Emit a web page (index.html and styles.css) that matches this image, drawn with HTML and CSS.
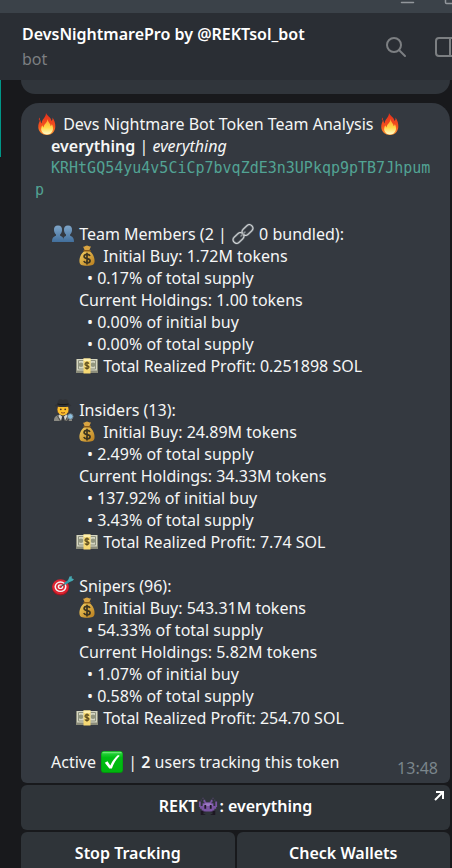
FILE: index.html
```html
<!DOCTYPE html>
<html lang="en">
<head>
    <meta charset="UTF-8">
    <meta name="viewport" content="width=device-width, initial-scale=1.0">
    <title>DevsNightmarePro by @REKTsol_bot</title>
    <link rel="stylesheet" href="styles.css">
</head>
<body>
    <!-- shared emoji drawings -->
    <svg class="sprite" aria-hidden="true">
        <defs>
            <linearGradient id="flame" x1="0" y1="0" x2="0" y2="1">
                <stop offset="0" stop-color="#e5301c"/>
                <stop offset="0.6" stop-color="#f4511e"/>
                <stop offset="1" stop-color="#ff9a2e"/>
            </linearGradient>
            <linearGradient id="flame-core" x1="0" y1="0" x2="0" y2="1">
                <stop offset="0" stop-color="#ff9d2b"/>
                <stop offset="0.55" stop-color="#ffd94a"/>
                <stop offset="1" stop-color="#fffbd0"/>
            </linearGradient>
            <linearGradient id="person" x1="0" y1="0" x2="0" y2="1">
                <stop offset="0" stop-color="#7fa6c9"/>
                <stop offset="1" stop-color="#426f9c"/>
            </linearGradient>
            <linearGradient id="gold" x1="0" y1="0" x2="1" y2="1">
                <stop offset="0" stop-color="#f3cf62"/>
                <stop offset="1" stop-color="#b87c1c"/>
            </linearGradient>
            <linearGradient id="green" x1="0" y1="0" x2="0" y2="1">
                <stop offset="0" stop-color="#35d849"/>
                <stop offset="0.3" stop-color="#00bd14"/>
                <stop offset="1" stop-color="#00b50e"/>
            </linearGradient>
        </defs>
        <symbol id="fire" viewBox="0 0 22 22">
            <path fill="url(#flame)" d="M10 0c1 3 5 4 5.500 8 1-1 1.200-2 1-3.500 2 3 3 6 2.800 9.500C19 19 15.500 22 11 22s-8.500-3-8.700-7.500C2.100 11.500 3 9 4.500 7c0 1.500.3 2.500 1.200 3.500C5.500 6 10 5 10 0z"/>
            <path fill="#c73a24" d="M3.500 4.500c.8 1.200.6 2.500-.2 3.500-.7-1.200-.6-2.400.2-3.500z"/>
            <path fill="url(#flame-core)" d="M11.500 6c.2 3 3 4.500 3.200 7.200.7-.6 1-1.200 1.100-2.200 1.300 2.500 1.700 5 .6 7.300-1 2-3 3.300-5.400 3.300s-4.500-1.300-5.400-3.300c-.8-2-.4-4.300.8-6 .2 1.200.6 1.700 1.300 2.200C7.600 11 11.500 10 11.500 6z"/>
        </symbol>
        <symbol id="people" viewBox="0 0 22 22">
            <g fill="url(#person)">
                <path d="M16 2.500c2.900 0 4.200 2 4 4.700-.1 1.900-.9 3.300-1.900 4.200v1.400c2 .8 3.900 1.500 3.900 6.200H11c0-4 1-5.200 3-6.200v-1.400c-1-.9-1.900-2.300-2-4.200-.2-2.700 1.100-4.700 4-4.700z"/>
                <path d="M6 2.500c2.900 0 4.200 2 4 4.700-.1 1.900-.9 3.300-1.900 4.200v1.400c2 .8 3.900 1.500 3.900 6.200H0c0-4.500 1.700-5.200 4-6.200v-1.400c-1-.9-1.900-2.300-2-4.200-.2-2.700 1.100-4.700 4-4.700z"/>
            </g>
        </symbol>
        <symbol id="chain" viewBox="0 0 22 22">
            <g fill="none" stroke="#5f666b" stroke-width="2.600">
                <rect x="9.500" y="3.500" width="12" height="7" rx="3.500" transform="rotate(-43 15.500 7)"/>
                <rect x="0.500" y="11.500" width="12" height="7" rx="3.500" transform="rotate(-43 6.500 15)"/>
            </g>
            <g fill="none" stroke="#d7dadc" stroke-width="1">
                <rect x="9.500" y="3.500" width="12" height="7" rx="3.500" transform="rotate(-43 15.500 7)"/>
                <rect x="0.500" y="11.500" width="12" height="7" rx="3.500" transform="rotate(-43 6.500 15)"/>
            </g>
            <path d="M9 13l4-4" stroke="#8c9296" stroke-width="1.500" stroke-linecap="round"/>
        </symbol>
        <symbol id="bag" viewBox="0 0 22 22">
            <path fill="#d9a441" d="M7 1.500c1.500.8 2.500-.9 4-.9s2 1.500 4 .7l-2 4.700H9z"/>
            <path fill="url(#gold)" d="M8.500 6h5c3.500 2.500 5.500 7 5 11-.3 3-2.300 3.700-7.500 3.700S3.800 20 3.500 17c-.5-4 1.500-8.500 5-11z"/>
            <path d="M8 5.700h6.200" stroke="#8a5a17" stroke-width="1.500" stroke-linecap="round"/>
            <path fill="none" stroke="#3c3420" stroke-width="1.700" d="M14 10.800c-.6-1.200-1.700-1.500-3-1.500-1.700 0-2.900.8-2.900 2.200 0 3 6 1.300 6 4.200 0 1.500-1.300 2.200-3 2.200-1.600 0-2.800-.6-3.300-1.900M11 7.700v11.800"/>
        </symbol>
        <symbol id="cash" viewBox="0 0 22 22">
            <path fill="#8b8c7a" d="M0 4h22v14H0z"/>
            <path fill="#d5d6c2" d="M1 4h20v11.500H1z"/>
            <path fill="none" stroke="#8f927f" d="M2.500 5.500h17v8.500h-17z"/>
            <circle cx="5" cy="9.800" r="2.300" fill="#92967f"/>
            <circle cx="17" cy="9.800" r="2.300" fill="#92967f"/>
            <path fill="#f5d873" d="M7.500 3.500h7v15h-7z"/>
            <path fill="#fff0ad" d="M7.500 3.500h7V6h-7z"/>
            <path fill="none" stroke="#5b4a1c" stroke-width="1.200" d="M13 8.700c-.5-.7-1.200-1-2-1-1.200 0-2 .6-2 1.500 0 2 4 1 4 2.900 0 1-.9 1.500-2 1.500-.9 0-1.700-.3-2.100-1.100M11 6.500v8.300"/>
        </symbol>
        <symbol id="spy" viewBox="0 0 22 22">
            <path fill="#5a4334" d="M5 7h12v7H5z"/>
            <ellipse cx="11" cy="10.500" rx="5.500" ry="6" fill="#fcbf2d"/>
            <path fill="#8b8b84" d="M2 22c0-4 1.500-5.500 6-6.500l3 3 3-3c4.500 1 6 2.500 6 6.500z"/>
            <path fill="#d6d6d0" d="M7.500 15.500l3.500 3 3.500-3 1 2.500-2.500 4h-4l-2.500-4z"/>
            <path fill="#33363a" d="M10 18h2l1 4H9z"/>
            <path d="M5.500 17l3 5M16 17l-2.500 5" stroke="#55554f" stroke-width="1.200"/>
            <path fill="#303236" d="M5.500 5C5.500 1.500 7 .3 8.500.3S10 1 11 1s1-.7 2.500-.7S16.500 1.500 16.500 5c1.500.4 2.700.8 2.700 1.500C19.200 7.500 15 8 11 8s-8.200-.5-8.200-1.500C2.800 5.800 4 5.400 5.500 5z"/>
            <path d="M5.500 5c3 .8 8 .8 11 0" fill="none" stroke="#17181a"/>
            <circle cx="8.800" cy="10.300" r="0.900" fill="#4a3426"/>
            <circle cx="13.200" cy="10.300" r="0.900" fill="#4a3426"/>
            <path d="M9 13.500c1.200.7 2.800.7 4 0" fill="none" stroke="#8c4d1d"/>
            <path d="M17 20l-1.500 2" stroke="#3a3c3e" stroke-width="1.500"/>
            <circle cx="18.300" cy="17.500" r="2.800" fill="#8dc0df" stroke="#69757d"/>
        </symbol>
        <symbol id="dart" viewBox="0 0 22 22">
            <ellipse cx="8.500" cy="12.700" rx="8.300" ry="7.800" fill="#9b1620"/>
            <ellipse cx="8.500" cy="11.700" rx="8.300" ry="7.500" fill="#dd2431"/>
            <ellipse cx="8.500" cy="11.700" rx="6" ry="5.400" fill="#f5f3f2"/>
            <ellipse cx="8.500" cy="11.700" rx="4.500" ry="4" fill="#dd2431"/>
            <ellipse cx="8.500" cy="11.700" rx="2.800" ry="2.400" fill="#f5f3f2"/>
            <circle cx="8.500" cy="11.700" r="1.300" fill="#dd2431"/>
            <path d="M9 11.500l5-3.500" stroke="#4b5054" stroke-width="1.200"/>
            <path d="M13 8.700l5-3.500" stroke="#2b9daa" stroke-width="2.400"/>
            <path fill="#45a9b2" d="M16 5.500l1.500-4L20 1.200l-.4 2.100 2.400 1-1.700 1.800-3.300.9z"/>
        </symbol>
        <symbol id="check" viewBox="0 0 22 22">
            <rect width="22" height="22" rx="3" fill="#03940d"/>
            <rect x="0.500" y="0.500" width="21" height="20.500" rx="2.500" fill="url(#green)"/>
            <path d="M2 1.700h18" stroke="#75ea7d" stroke-linecap="round"/>
            <path fill="#fff" d="M3.800 11.800l2.700-1.500 2.800 4.200c1.700-4 4.300-7.600 7.700-10.500l1.700.8c-3.800 3.700-6 7.700-7.800 12.700H8.300z"/>
        </symbol>
        <symbol id="invader" viewBox="0 0 22 22">
            <path fill="#1d1722" d="M3 16h5v2H6v2h2v1H3zM14 16h5v5h-5v-1h2v-2h-2z"/>
            <path fill="#7a55a3" d="M6 4h2v2h1v1h4V6h1V4h2v3h-1v1h2v3h2V6h2v6h-1v2h-2v2h-2v1H6v-1H4v-2H2v-2H1V6h2v5h2V8h2V7H6z"/>
            <path fill="#9b78c4" d="M8 8h6v1h2v2H6V9h2z"/>
            <path fill="#1d1722" d="M7 10h2v4H7zM13 10h2v4h-2z"/>
            <path fill="#6a4c8e" d="M5 2h1v1H5zM16 2h1v1h-1zM3 4h1v1H3zM18 4h1v1h-1z"/>
        </symbol>
    </svg>

    <div class="titlebar">
        <svg width="60" height="13" viewBox="0 0 60 13" fill="none" stroke="#92979c" aria-hidden="true">
            <path d="M9.500 2.500h12" stroke-linecap="round" stroke-width="1.500"/>
            <rect x="53.500" y="-8.500" width="12" height="12" rx="1" stroke-width="1.500"/>
        </svg>
    </div>

    <header class="chat-header">
        <div class="chat-info">
            <h1 class="chat-name">DevsNightmarePro by @REKTsol_bot</h1>
            <p class="chat-status">bot</p>
        </div>
        <button class="icon-btn" type="button" aria-label="Search">
            <svg width="22" height="22" viewBox="0 0 22 22" fill="none" stroke="#7c7f82" stroke-width="2" stroke-linecap="round">
                <circle cx="9" cy="9" r="7"/>
                <path d="M14 14l6 6"/>
            </svg>
        </button>
        <button class="icon-btn" type="button" aria-label="Toggle side panel">
            <svg width="22" height="22" viewBox="0 0 22 22" fill="none" stroke="#7c7f82" stroke-width="2">
                <rect x="1" y="2" width="20" height="18" rx="3"/>
                <path d="M15 2v18"/>
            </svg>
        </button>
    </header>

    <main class="chat">
        <div class="rail"></div>
        <div class="messages">
            <div class="previous"></div>

            <article class="message">
                <div class="line"><svg class="emoji"><use href="#fire"/></svg> Devs Nightmare Bot Token Team Analysis <svg class="emoji"><use href="#fire"/></svg></div>
                <div class="line indent"><b>everything</b> | <i>everything</i></div>
                <div class="line address"><code>KRHtGQ54yu4v5CiCp7bvqZdE3n3UPkqp9pTB7Jhpump</code></div>

                <section class="group">
                    <div class="line indent"><svg class="emoji"><use href="#people"/></svg> Team Members (2 | <svg class="emoji"><use href="#chain"/></svg> 0 bundled):</div>
                    <div class="line item"><svg class="emoji"><use href="#bag"/></svg> Initial Buy: 1.72M tokens</div>
                    <div class="line bullet">• 0.17% of total supply</div>
                    <div class="line holdings">Current Holdings: 1.00 tokens</div>
                    <div class="line bullet">• 0.00% of initial buy</div>
                    <div class="line bullet">• 0.00% of total supply</div>
                    <div class="line item"><svg class="emoji"><use href="#cash"/></svg> Total Realized Profit: 0.251898 SOL</div>
                </section>

                <section class="group">
                    <div class="line indent"><svg class="emoji"><use href="#spy"/></svg> Insiders (13):</div>
                    <div class="line item"><svg class="emoji"><use href="#bag"/></svg> Initial Buy: 24.89M tokens</div>
                    <div class="line bullet">• 2.49% of total supply</div>
                    <div class="line holdings">Current Holdings: 34.33M tokens</div>
                    <div class="line bullet">• 137.92% of initial buy</div>
                    <div class="line bullet">• 3.43% of total supply</div>
                    <div class="line item"><svg class="emoji"><use href="#cash"/></svg> Total Realized Profit: 7.74 SOL</div>
                </section>

                <section class="group">
                    <div class="line indent"><svg class="emoji"><use href="#dart"/></svg> Snipers (96):</div>
                    <div class="line item"><svg class="emoji"><use href="#bag"/></svg> Initial Buy: 543.31M tokens</div>
                    <div class="line bullet">• 54.33% of total supply</div>
                    <div class="line holdings">Current Holdings: 5.82M tokens</div>
                    <div class="line bullet">• 1.07% of initial buy</div>
                    <div class="line bullet">• 0.58% of total supply</div>
                    <div class="line item"><svg class="emoji"><use href="#cash"/></svg> Total Realized Profit: 254.70 SOL</div>
                </section>

                <div class="footer">
                    <div class="line indent">Active <svg class="emoji"><use href="#check"/></svg> | <b>2</b> users tracking this token</div>
                    <time class="time">13:48</time>
                </div>
            </article>

            <div class="keyboard">
                <button class="key wide" type="button">
                    REKT<svg class="emoji"><use href="#invader"/></svg>: everything
                    <svg class="arrow" width="10" height="10" viewBox="0 0 10 10" fill="none" stroke="#fff" stroke-width="2" aria-hidden="true">
                        <path d="M1 9l7-7M2 1h7v7"/>
                    </svg>
                </button>
                <button class="key" type="button">Stop Tracking</button>
                <button class="key" type="button">Check Wallets</button>
            </div>
        </div>
    </main>
</body>
</html>
```
FILE: styles.css
```css
* {
    box-sizing: border-box;
}

body {
    margin: 0;
    height: 100vh;
    overflow: hidden;
    display: flex;
    flex-direction: column;
    background-color: #18191c;
    color: #fff;
    font-family: "Noto Sans", "Open Sans", sans-serif;
    font-size: 16px;
    line-height: 22px;
}

b {
    font-weight: 600;
}

.sprite {
    position: absolute;
    width: 0;
    height: 0;
}

.titlebar {
    flex: none;
    display: flex;
    justify-content: flex-end;
    height: 13px;
    background-color: #3b4249;
}

/* header */
.chat-header {
    flex: none;
    display: flex;
    align-items: center;
    gap: 28px;
    height: 67px;
    padding-left: 22px;
    background-color: #2a2e34;
    overflow: hidden;
}

.chat-info {
    flex: 1;
    min-width: 0;
    display: flex;
    flex-direction: column;
    gap: 3px;
}

.chat-name {
    margin: 0;
    font-size: 16px;
    font-weight: 600;
    line-height: 22px;
    white-space: nowrap;
}

.chat-status {
    margin: 0;
    color: #7c7f82;
}

.icon-btn {
    flex: none;
    width: 22px;
    height: 22px;
    padding: 0;
    border: none;
    background: none;
    cursor: pointer;
}

.icon-btn svg {
    display: block;
}

.icon-btn:last-child {
    margin-right: -5px;
}

/* messages */
.chat {
    flex: 1;
    min-height: 0;
    display: flex;
    gap: 20px;
    padding-right: 2px;
}

.rail {
    flex: none;
    width: 1px;
    height: 77px;
    background-color: #009687;
}

.messages {
    flex: 1;
    min-width: 0;
}

.previous {
    height: 14px;
    margin-bottom: 9px;
    border-radius: 0 0 18px 18px;
    background-color: #30353b;
}

.message {
    padding: 10px 12px 10px 14px;
    border-radius: 18px 18px 6px 6px;
    background-color: #343940;
    color: #f5f6f6;
}

.line {
    min-height: 22px;
}

.indent {
    padding-left: 16px;
}

.item {
    padding-left: 40px;
}

.bullet {
    padding-left: 52px;
}

.holdings {
    padding-left: 44px;
}

.address {
    text-indent: 16px;
    word-break: break-all;
    color: #52a394;
}

.address code {
    font-family: "DejaVu Sans Mono", monospace;
    font-size: 15px;
    vertical-align: top;
}

.group {
    margin-top: 22px;
}

.emoji {
    width: 22px;
    height: 22px;
    margin: 0 1px;
    vertical-align: top;
}

.footer {
    display: flex;
    justify-content: space-between;
    align-items: flex-end;
    margin-top: 22px;
}

.time {
    margin-bottom: -6px;
    color: #7b868c;
}

/* inline keyboard */
.keyboard {
    display: grid;
    grid-template-columns: 1fr 1fr;
    gap: 2px;
    margin-top: 2px;
}

.key {
    position: relative;
    height: 45px;
    padding: 0 0 4px;
    border: none;
    border-radius: 6px;
    background-color: #2f3439;
    color: #fff;
    font: inherit;
    font-weight: 600;
    cursor: pointer;
}

.key:hover {
    background-color: #383e44;
}

.key .emoji {
    width: 20px;
}

.wide {
    grid-column: span 2;
}

.arrow {
    position: absolute;
    top: 6px;
    right: 6px;
}
```
